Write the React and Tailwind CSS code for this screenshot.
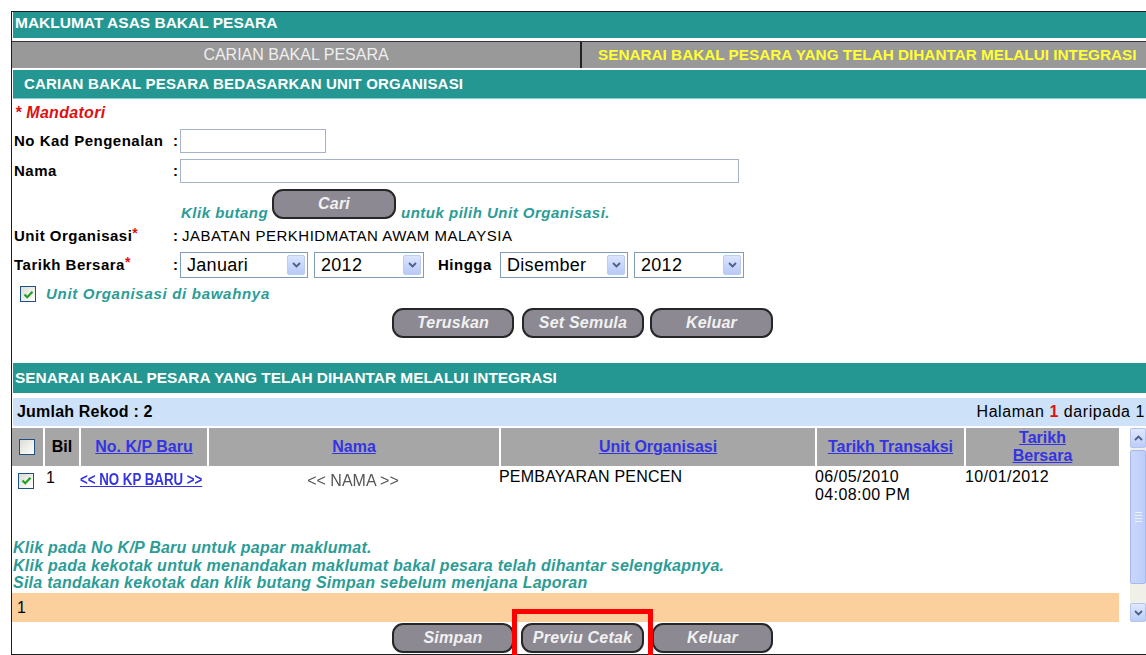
import React from "react";

const FONT = "font-['Liberation_Sans',Arial,sans-serif]";

function XpCheck({ checked }) {
  return (
    <span className="inline-flex w-[16px] h-[16px] border border-[#1c5180] bg-linear-to-br from-[#dcdcd6] to-white items-center justify-center shrink-0">
      {checked && (
        <svg width="11" height="11" viewBox="0 0 11 11">
          <path d="M1.5 5.5 L4.2 8.2 L9.5 2.8" stroke="#21a121" strokeWidth="2.2" fill="none" />
        </svg>
      )}
    </span>
  );
}

function Chevron({ up }) {
  return (
    <svg width="9" height="6" viewBox="0 0 9 6">
      <path
        d={up ? "M1 5 L4.5 1.5 L8 5" : "M1 1 L4.5 4.5 L8 1"}
        stroke="#4d6185"
        strokeWidth="1.8"
        fill="none"
      />
    </svg>
  );
}

function XpSelect({ value, className }) {
  return (
    <div className={`flex items-center h-[26px] border border-[#7f9db9] bg-white ${className}`}>
      <span className="flex-1 pl-[6px] text-[18px] tracking-[0.3px] leading-[20px] text-black">{value}</span>
      <span className="mr-[2px] w-[18px] h-[20px] rounded-[2px] border border-[#bccbf2] bg-linear-to-b from-[#dbe5fe] to-[#b7c9f7] flex items-center justify-center">
        <Chevron />
      </span>
    </div>
  );
}

function Btn({ children, className }) {
  return (
    <div
      className={`h-[30px] rounded-[11px] border-2 border-[#262626] bg-[#8c8993] flex items-center justify-center text-[#f1f1f1] font-bold italic text-[16px] tracking-[0.2px] ${className}`}
    >
      {children}
    </div>
  );
}

function Req() {
  return <span className="text-[#e01010] text-[14px] relative -top-[3px]">*</span>;
}

function Scrollbar() {
  return (
    <div className="w-[16px] h-full flex flex-col bg-[#f0efe8]">
      <div className="h-[20px] border border-[#b4c4ee] rounded-[2px] bg-linear-to-b from-[#e0e8fe] to-[#bccdf8] flex items-center justify-center">
        <Chevron up />
      </div>
      <div className="h-[134px] mt-[2px] border border-[#a6b9ee] rounded-[2px] bg-linear-to-r from-[#c9d7fd] to-[#bccdf8] flex flex-col items-center justify-center gap-[2px]">
        <span className="w-[7px] h-px bg-[#eef2fe]" />
        <span className="w-[7px] h-px bg-[#eef2fe]" />
        <span className="w-[7px] h-px bg-[#eef2fe]" />
        <span className="w-[7px] h-px bg-[#eef2fe]" />
      </div>
      <div className="flex-1" />
      <div className="h-[19px] border border-[#b4c4ee] rounded-[2px] bg-linear-to-b from-[#e0e8fe] to-[#bccdf8] flex items-center justify-center">
        <Chevron />
      </div>
    </div>
  );
}

export default function App() {
  const link = "text-[#3434e2] underline font-bold";
  return (
    <div className={`relative w-[1146px] h-[655px] overflow-hidden bg-white pl-[11px] pt-[11px] ${FONT} text-[15px] tracking-[0.5px] text-black`}>
      <div className="h-[644px] border-l border-t border-b border-[#1e1e1e] flex flex-col">
        {/* page title */}
        <div className="ml-[1px] h-[26px] bg-[#249792] text-white font-bold text-[15.5px] tracking-[0px] leading-[22px] pl-[2px]">
          MAKLUMAT ASAS BAKAL PESARA
        </div>
        <div className="h-[3px]" />
        {/* tabs */}
        <div className="flex h-[27px] border-t border-[#333] bg-[#999999]">
          <div className="w-[568px] text-center leading-[26px] text-[#efefef] text-[16px] tracking-[0px]">CARIAN BAKAL PESARA</div>
          <div className="w-[2px] bg-[#222]" />
          <div className="flex-1 pl-[16px] leading-[26px] text-[#ffff33] font-bold whitespace-nowrap text-[15.3px] tracking-[0px]">
            SENARAI BAKAL PESARA YANG TELAH DIHANTAR MELALUI INTEGRASI
          </div>
        </div>
        <div className="h-[2px]" />
        <div className="ml-[1px] h-[29px] bg-[#249792] border-b border-[#7fd0cb] text-white font-bold text-[15px] tracking-[0.2px] leading-[28px] pl-[11px]">
          CARIAN BAKAL PESARA BEDASARKAN UNIT ORGANISASI
        </div>

        {/* search form */}
        <div className="pl-[2px]">
          <div className="h-[27px] flex items-center pl-[1px] text-[#dd1111] font-bold italic text-[16px] tracking-[0.3px]">* Mandatori</div>
          <div className="h-[30px] flex items-center">
            <span className="w-[158px] font-bold">No Kad Pengenalan</span>
            <span className="w-[8px] font-bold pl-[1px]">:</span>
            <div className="w-[146px] h-[24px] border border-[#a4b3c8]" />
          </div>
          <div className="h-[30px] flex items-center">
            <span className="w-[158px] font-bold">Nama</span>
            <span className="w-[8px] font-bold pl-[1px]">:</span>
            <div className="w-[559px] h-[24px] border border-[#a4b3c8]" />
          </div>
          <div className="h-[36px] flex items-end pl-[167px] text-[#2b9c96] font-bold italic whitespace-nowrap">
            <span className="w-[91px] leading-[18px]">Klik butang</span>
            <Btn className="w-[124px] mb-[3px]">Cari</Btn>
            <span className="leading-[18px] ml-[5px]">untuk pilih Unit Organisasi.</span>
          </div>
          <div className="h-[28px] flex items-center">
            <span className="w-[158px] font-bold">
              Unit Organisasi
              <Req />
            </span>
            <span className="w-[10px] font-bold pl-[1px]">:</span>
            <span>JABATAN PERKHIDMATAN AWAM MALAYSIA</span>
          </div>
          <div className="h-[30px] flex items-center">
            <span className="w-[158px] font-bold">
              Tarikh Bersara
              <Req />
            </span>
            <span className="w-[8px] font-bold pl-[1px]">:</span>
            <XpSelect value="Januari" className="w-[128px]" />
            <XpSelect value="2012" className="w-[110px] ml-[6px]" />
            <span className="font-bold ml-[14px] w-[62px]">Hingga</span>
            <XpSelect value="Disember" className="w-[128px]" />
            <XpSelect value="2012" className="w-[110px] ml-[6px]" />
          </div>
          <div className="h-[28px] flex items-center pl-[6px]">
            <XpCheck checked />
            <span className="ml-[10px] text-[#2b9c96] font-bold italic tracking-[0.7px]">Unit Organisasi di bawahnya</span>
          </div>
          <div className="flex pl-[378px]">
            <Btn className="w-[122px]">Teruskan</Btn>
            <Btn className="w-[122px] ml-[8px]">Set Semula</Btn>
            <Btn className="w-[123px] ml-[6px]">Keluar</Btn>
          </div>
        </div>

        <div className="h-[25px]" />

        {/* submitted list */}
        <div className="ml-[1px] h-[30px] bg-[#249792] text-white font-bold text-[15.4px] tracking-[0px] leading-[30px] pl-[2px] whitespace-nowrap">
          SENARAI BAKAL PESARA YANG TELAH DIHANTAR MELALUI INTEGRASI
        </div>
        <div className="h-[5px]" />
        <div className="ml-[1px] h-[28px] bg-[#cde1f9] flex items-center justify-between pl-[4px] pr-[1px] text-[16px] tracking-[0.2px] whitespace-nowrap">
          <span className="font-bold">Jumlah Rekod : 2</span>
          <span className="tracking-[0.55px]">
            Halaman <span className="text-[#e01010] font-bold">1</span> daripada 1
          </span>
        </div>
        <div className="h-[2px]" />

        <div className="flex h-[194px]">
          <div className="w-[1107px] flex flex-col">
            <div className="flex h-[38px] bg-[#a6a6a6] font-bold text-[16px] tracking-[0px]">
              <div className="w-[31px] flex items-center pl-[7px]">
                <XpCheck />
              </div>
              <div className="w-[36px] border-l-2 border-white flex items-center justify-center">Bil</div>
              <div className="w-[128px] border-l-2 border-white flex items-center justify-center">
                <span className={link}>No. K/P Baru</span>
              </div>
              <div className="w-[292px] border-l-2 border-white flex items-center justify-center">
                <span className={link}>Nama</span>
              </div>
              <div className="w-[316px] border-l-2 border-white flex items-center justify-center">
                <span className={link}>Unit Organisasi</span>
              </div>
              <div className="w-[149px] border-l-2 border-white flex items-center justify-center">
                <span className={link}>Tarikh Transaksi</span>
              </div>
              <div className="w-[155px] border-l-2 border-white flex items-center justify-center text-center leading-[18px]">
                <span className={link}>
                  Tarikh
                  <br />
                  Bersara
                </span>
              </div>
            </div>

            <div className="flex h-[73px] leading-[18px] text-[16px] tracking-[0.2px]">
              <div className="w-[31px] pl-[6px] pt-[6px]">
                <XpCheck checked />
              </div>
              <div className="w-[36px] pl-[3px] pt-[3px]">1</div>
              <div className="w-[128px] pl-[1px] pt-[5px]">
                <span className="inline-block origin-left scale-x-[0.83] whitespace-nowrap text-[#3434e2] underline font-bold tracking-[0px]">
                  &lt;&lt; NO KP BARU &gt;&gt;
                </span>
              </div>
              <div className="w-[292px] pt-[6px] text-center">
                <span className="inline-block text-[#555] tracking-[0px] blur-[0.4px]">&lt;&lt; NAMA &gt;&gt;</span>
              </div>
              <div className="w-[316px] pt-[2px]">PEMBAYARAN PENCEN</div>
              <div className="w-[149px] pt-[2px] tracking-[0.4px]">
                06/05/2010
                <br />
                04:08:00 PM
              </div>
              <div className="w-[155px] pl-[1px] pt-[2px] tracking-[0.4px]">10/01/2012</div>
            </div>

            <div className="pl-[1px] text-[#2b9c96] font-bold italic text-[16px] tracking-[0.25px] leading-[17.5px] whitespace-nowrap">
              <div>Klik pada No K/P Baru untuk papar maklumat.</div>
              <div>Klik pada kekotak untuk menandakan maklumat bakal pesara telah dihantar selengkapnya.</div>
              <div>Sila tandakan kekotak dan klik butang Simpan sebelum menjana Laporan</div>
            </div>
            <div className="mt-[1.5px] h-[29px] bg-[#fcd09c] flex items-center pl-[5px] text-[16px]">1</div>
          </div>
          <div className="w-[11px]" />
          <Scrollbar />
        </div>

        <div className="h-[1px]" />
        <div className="flex pl-[380px]">
          <Btn className="w-[122px]">Simpan</Btn>
          <Btn className="w-[123px] ml-[7px]">Previu Cetak</Btn>
          <Btn className="w-[121px] ml-[8px]">Keluar</Btn>
        </div>
      </div>

      {/* highlight marker */}
      <div className="absolute left-[512px] top-[609px] w-[141px] h-[60px] border-[5px] border-[#ff0000]" />
    </div>
  );
}
